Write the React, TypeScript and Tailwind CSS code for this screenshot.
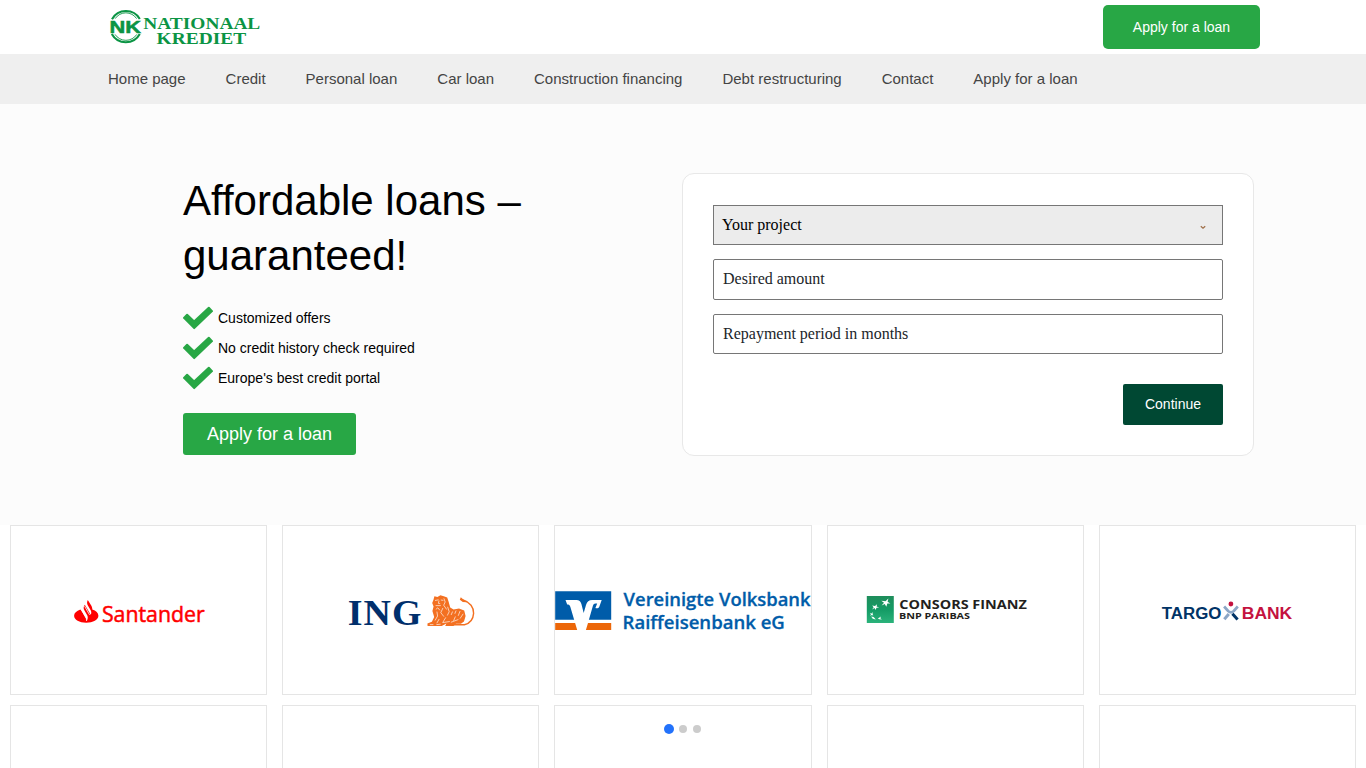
import type { ReactNode } from "react";

const NAV_ITEMS = [
  "Home page",
  "Credit",
  "Personal loan",
  "Car loan",
  "Construction financing",
  "Debt restructuring",
  "Contact",
  "Apply for a loan",
];

const BENEFITS = [
  "Customized offers",
  "No credit history check required",
  "Europe's best credit portal",
];

function CheckIcon() {
  return (
    <svg width="30" height="30" viewBox="0 0 30 30" fill="#28a745" stroke="#28a745" strokeWidth="2" strokeLinejoin="round">
      <path d="M1 14.9L4.1 11.7L11.1 18.5L25.8 4.8L29 8.1L11.2 25.1Z" />
    </svg>
  );
}

function BrandLogo() {
  return (
    <svg width="156" height="54" viewBox="109 0 156 54" role="img" aria-label="Nationaal Krediet" fill="#0b9444">
      <g fill="none" stroke="#0b9444">
        <path d="M112 19.2A16 16 0 0 1 139.8 19" strokeWidth="2.1" />
        <path d="M115.2 18.6A12.8 12.8 0 0 1 136.6 18.6" strokeWidth="0.9" />
        <path d="M111.8 34A16 16 0 0 0 139.8 34" strokeWidth="2.1" />
        <path d="M115 34.4A13 13 0 0 0 136.8 34.4" strokeWidth="0.9" />
      </g>
      <text
        x="109.6"
        y="32.8"
        stroke="#0b9444"
        strokeWidth="0.5"
        fontFamily="Liberation Sans, sans-serif"
        fontWeight="700"
        fontSize="16.5"
        textLength="31.5"
        lengthAdjust="spacingAndGlyphs"
      >
        NK
      </text>
      <g fontFamily="Liberation Serif, serif" fontWeight="700" fontSize="17">
        <text x="143.3" y="29" textLength="117" lengthAdjust="spacingAndGlyphs">NATIONAAL</text>
        <text x="156.6" y="43.7" textLength="89.5" lengthAdjust="spacingAndGlyphs">KREDIET</text>
      </g>
    </svg>
  );
}

function SantanderLogo() {
  return (
    <svg width="140" height="40" viewBox="68.6 590 140 40" role="img" aria-label="Santander">
      <path
        fill="#f00"
        d="M80 609.5C76 611 73.7 613 73.7 615.8C73.7 619.8 79 622.8 85.8 622.8C92.6 622.8 98 619.8 98 615.8C98 613 95.6 610.9 91.9 609.6C92 608 91.4 606.6 90.5 605.1L87.4 600.1C86.4 602 86.4 603.8 87.6 605.8L90.4 610.6C91 612 91.1 613.4 90.3 614.8L84.4 604.8C82.9 606.8 82.9 608.7 84.2 610.8L86.8 615.3C87.7 617 87.5 619.2 86.4 620.8C86 619 85.3 617.6 84.5 616.4L81.8 611.9C81.2 610.8 80.6 610.4 80 609.5Z"
      />
      <path d="M80.8 609.4L85.9 618.4L86.2 621M84.2 606.2L89.2 614.9" fill="none" stroke="#fff" strokeWidth="0.8" />
      <text x="101.5" y="621.6" fill="#f00" stroke="#f00" strokeWidth="0.5" fontFamily="Open Sans, sans-serif" fontSize="21" textLength="102.8" lengthAdjust="spacingAndGlyphs">
        Santander
      </text>
    </svg>
  );
}

function IngLogo() {
  return (
    <svg width="136" height="50" viewBox="342.6 585 136 50" role="img" aria-label="ING">
      <text
        x="347.4"
        y="625.4"
        fill="#002f6c"
        fontFamily="Liberation Serif, serif"
        fontWeight="700"
        fontSize="35.2"
        letterSpacing="1"
        textLength="74.8"
        lengthAdjust="spacingAndGlyphs"
      >
        ING
      </text>
      <g fill="#f37021">
        <path d="M433 600L434 596.2L437 597L440 595.2L443.4 596.2L446.8 597.6L448.3 602L449.8 607.4L453.2 609.6L458.6 608.5L463.8 610.6L465.2 616L463.6 621.6L460.5 623.8H455.6L453 626H444.8L446 623.4L441.3 626H427.2L427 623.6L431.5 621.7L433.8 617L432 611L433.2 606.5L431.8 603Z" />
        <path d="M459.4 599.8L460.4 597.2L463 599.6L466.6 602.2L462.4 602Z" />
      </g>
      <path d="M462.6 600C469.6 602 473.5 607.6 473.2 613.4C472.8 619.4 469.1 623.5 464 624.8H449" fill="none" stroke="#f37021" strokeWidth="1.4" />
      <g fill="none" stroke="#fff" strokeWidth="0.65">
        <path d="M434.6 600.5L438.2 599.8M440.4 600L443 600.4M438.6 600.5L438 603.4L439.8 603.7M435.2 605.6H440.4M435.4 609.4L437.4 607.8L439.5 610.3" />
        <path d="M443.5 598.4L444.8 602L443.3 605.2L446.3 609.5M442.5 608L440.4 612.7L443.5 616.6M436.5 611.6L437.2 616L434.6 620.5M447.2 606.8L448.8 611.7L446.9 615.5" />
        <path d="M452.2 611.5L450.7 615M455.7 610.5L454.4 613.8M459.7 611L457.8 615.8M462.8 613.8L459.6 618.6M455 616.5L453.2 620.8M458 619.5L450.5 622.3M445.4 617.4L442.3 622.6L449.4 621.5M438.8 619L436.4 623.2M429.4 624.6H433M436 624.6L440.2 624.2" />
      </g>
    </svg>
  );
}

function VolksbankLogo() {
  return (
    <svg width="257" height="60" viewBox="554.8 580 257 60" role="img" aria-label="Vereinigte Volksbank Raiffeisenbank eG" className="shrink-0">
      <path d="M555 591.2H611V619.8H555Z" fill="#005ca9" />
      <path d="M555 623H611V630H555Z" fill="#ec6608" />
      <path
        d="M565.3 600H576.2C579 600 580.4 601.2 581.2 604L583.5 613L585.8 605C586.9 601.5 588.6 600 592 600H601.5L599.2 606.4C598.7 608 597 608.6 595.2 608.1L597 603.5H595.3C593.9 603.5 593.3 604.2 592.8 605.6L588.7 619.8L587.8 623L585.7 630H577L574.9 623L570.1 606.8C569.6 605.2 568.7 604.6 567 604.6Z"
        fill="#fff"
      />
      <g fill="#005ca9" stroke="#005ca9" strokeWidth="0.3" fontFamily="Open Sans, sans-serif" fontWeight="600" fontSize="18.5">
        <text x="623.4" y="605.9" textLength="187" lengthAdjust="spacingAndGlyphs">Vereinigte Volksbank</text>
        <text x="622.4" y="628.7" textLength="162.2" lengthAdjust="spacingAndGlyphs">Raiffeisenbank eG</text>
      </g>
    </svg>
  );
}

function ConsorsLogo() {
  return (
    <svg width="178" height="40" viewBox="866.2 590 178 40" role="img" aria-label="Consors Finanz BNP Paribas">
      <defs>
        <linearGradient id="bnp" x1="0" y1="0" x2="0" y2="1">
          <stop offset="0" stopColor="#1f8d5b" />
          <stop offset="0.5" stopColor="#149b65" />
          <stop offset="1" stopColor="#2bb37b" />
        </linearGradient>
      </defs>
      <path d="M867 596H894V623H867Z" fill="url(#bnp)" />
      <g fill="#fff">
        <path d="M881.5 600.7L885.7 601.3L888.6 598.6L887.8 601.8L890.6 603.4L887.5 603.6L886.5 606.8L885 603.9L881.8 605.5L884.2 602.8Z" />
        <path d="M872.4 605.6L875.2 606L877.2 604.2L876.8 606.4L879.4 607.4L876.7 607.8L875.8 610.1L874.7 608L872.3 609.4L873.8 607.2Z" />
        <path d="M870.2 612.8L871.8 613.4L873.3 612L872.7 613.8L873.5 615.6L871.9 614.9L870.5 616L871.1 614.2Z" />
        <path d="M871.4 616.5L873.8 617L876 619.5L873.8 619.1L872.7 618.6Z" />
        <path d="M878 618.4L881.2 616.4L880.5 618.3L882.1 619.5L879.6 619.2Z" />
      </g>
      <g fill="#231f20" fontFamily="Open Sans, sans-serif" fontWeight="700">
        <text x="899.5" y="609.4" fontSize="12.8" textLength="127.5" lengthAdjust="spacingAndGlyphs">CONSORS FINANZ</text>
        <text x="899.2" y="618.9" fontSize="9.4" textLength="71" lengthAdjust="spacingAndGlyphs">BNP PARIBAS</text>
      </g>
    </svg>
  );
}

function TargoLogo() {
  return (
    <svg width="140" height="40" viewBox="1157.4 590 140 40" role="img" aria-label="Targobank">
      <g fontFamily="Liberation Sans, sans-serif" fontWeight="700" fontSize="16">
        <text x="1162.2" y="618.7" fill="#003366" textLength="59.6" lengthAdjust="spacingAndGlyphs">TARGO</text>
        <text x="1242.2" y="618.7" fill="#c4123f" textLength="50.4" lengthAdjust="spacingAndGlyphs">BANK</text>
      </g>
      <circle cx="1231.3" cy="604" r="2.4" fill="#c4123f" />
      <path d="M1224.5 606.5L1228.5 611Q1231.4 613.6 1234.2 611L1238.2 606.5" fill="none" stroke="#8ba6c6" strokeWidth="2.7" />
      <path d="M1229.2 614L1224.7 619.3" fill="none" stroke="#8ba6c6" strokeWidth="3" />
      <path d="M1232.8 613.8L1238 619.5" fill="none" stroke="#003366" strokeWidth="3" />
    </svg>
  );
}

function BankCard({ children }: { children?: ReactNode }) {
  return (
    <div className="flex h-[170px] min-w-0 items-center justify-center border border-[#e5e5e5] bg-white">
      {children}
    </div>
  );
}

export default function App() {
  return (
    <div className="h-screen overflow-hidden bg-white font-['Liberation_Sans',sans-serif] text-black">
      <header className="flex h-[54px] items-center justify-between pr-[106px] pl-[109px]">
        <BrandLogo />
        <button className="h-11 w-[157px] rounded-[5px] bg-[#28a745] text-sm text-white">
          Apply for a loan
        </button>
      </header>

      <nav className="flex h-[50px] items-center gap-10 bg-[#efefef] px-[108px] text-[15px] text-[#444]">
        {NAV_ITEMS.map((item) => (
          <a key={item} href="#" className="whitespace-nowrap">
            {item}
          </a>
        ))}
      </nav>

      <main>
        <section className="flex h-[421px] items-start bg-[#fcfcfc] pt-[69px] pl-[183px]">
          <div className="w-[499px]">
            <h1 className="text-[42px] leading-[55px]">
              Affordable loans –<br />
              guaranteed!
            </h1>
            <ul className="mt-5 text-sm">
              {BENEFITS.map((benefit) => (
                <li key={benefit} className="flex h-[30px] items-center gap-[5px]">
                  <CheckIcon />
                  {benefit}
                </li>
              ))}
            </ul>
            <button className="mt-5 h-[42px] w-[173px] rounded-[3px] bg-[#28a745] text-lg text-white">
              Apply for a loan
            </button>
          </div>

          <form className="flex h-[283px] w-[572px] flex-col rounded-xl border border-[#e8e8e8] bg-white px-[30px] pt-[31px] font-['Liberation_Serif',serif]">
            <div className="flex h-10 items-center justify-between border border-[#767676] bg-[#ececec] pr-[16px] pl-2">
              <span>Your project</span>
              <svg width="6" height="5" viewBox="0 0 6 5" className="mt-1" fill="none" stroke="#a0704a" strokeWidth="1.3">
                <path d="M0.8 1.2L3 3.2L5.2 1.2" />
              </svg>
            </div>
            <input
              placeholder="Desired amount"
              className="mt-3.5 h-[41px] rounded-xs border border-[#767676] bg-white px-[9px] pb-0.5 text-base placeholder:text-[#212529]"
            />
            <input
              placeholder="Repayment period in months"
              className="mt-3.5 h-10 rounded-xs border border-[#767676] bg-white px-[9px] text-base placeholder:text-[#212529]"
            />
            <button
              type="button"
              className="mt-[30px] h-[41px] w-[100px] self-end rounded-xs bg-[#004833] pb-0.5 font-['Liberation_Sans',sans-serif] text-sm text-white"
            >
              Continue
            </button>
          </form>
        </section>

        <section className="relative grid grid-cols-5 gap-x-[15px] gap-y-2.5 px-2.5">
          <BankCard><SantanderLogo /></BankCard>
          <BankCard><IngLogo /></BankCard>
          <BankCard><VolksbankLogo /></BankCard>
          <BankCard><ConsorsLogo /></BankCard>
          <BankCard><TargoLogo /></BankCard>
          <BankCard />
          <BankCard />
          <BankCard />
          <BankCard />
          <BankCard />

          {/* slider dots sit on top of the second row */}
          <div className="absolute top-[199px] left-[664px] flex h-2.5 items-center">
            <span className="size-2.5 rounded-full bg-[#2372fb]" />
            <span className="ml-[5px] size-2 rounded-full bg-[#ccc]" />
            <span className="ml-1.5 size-2 rounded-full bg-[#ccc]" />
          </div>
        </section>
      </main>
    </div>
  );
}
